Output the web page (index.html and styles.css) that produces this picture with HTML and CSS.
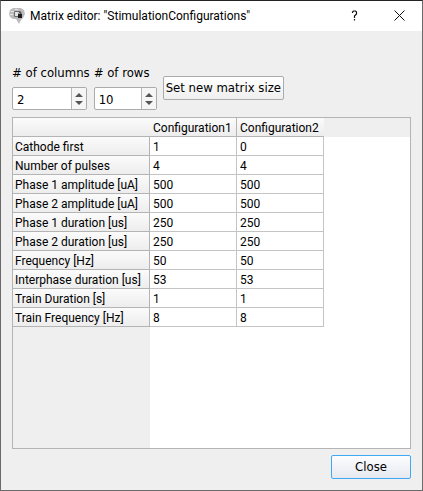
FILE: index.html
```html
<!DOCTYPE html>
<html lang="en">
<head>
<meta charset="utf-8">
<title>Matrix editor</title>
<link rel="stylesheet" href="styles.css">
</head>
<body>
<main class="window">
  <header class="titlebar">
    <svg class="app-icon" viewBox="0 0 16 16" aria-hidden="true">
      <path d="M4 0h8l3 2 1 4-2 4-2 2-2 4-3-5H4L1 9 0 6l1-4z" fill="#bcbcbc"/>
      <path d="M5.500 3.500h6v5h-6z" fill="#e4e4e4" stroke="#6a6a6a"/>
      <path d="M2 3.500h3M1 6.500h3M6 1.500h3" stroke="#e6e6e6"/>
      <path d="M9 6h4v4H9z" fill="#1c1c1c"/>
      <path d="M10 6V4.500h2V6" fill="none" stroke="#555"/>
    </svg>
    <h1 class="title">Matrix editor: "StimulationConfigurations"</h1>
    <button class="caption-button" type="button" aria-label="Help">
      <svg viewBox="0 0 12 12"><path d="M3.500 3V2L4.500 1H6.500L7.500 2V4L5.500 6V8M5.500 9V10.500" fill="none" stroke="#111" stroke-width="1.200"/></svg>
    </button>
    <button class="caption-button" type="button" aria-label="Close window">
      <svg viewBox="0 0 12 12"><path d="M0.500 0.500l10 10M10.500 0.500L0.500 10.500" stroke="#111"/></svg>
    </button>
  </header>
  <form class="content">
    <div class="size-row">
      <div class="fields">
        <div class="field">
          <label for="columns"># of columns</label>
          <div class="spin spin-wide">
            <input id="columns" type="number" value="2">
            <div class="steps">
              <button type="button" aria-label="More columns"><svg viewBox="0 0 8 4"><path d="M0 4l4-4 4 4z"/></svg></button>
              <button type="button" aria-label="Fewer columns"><svg viewBox="0 0 8 4"><path d="M0 0l4 4 4-4z"/></svg></button>
            </div>
          </div>
        </div>
        <div class="field">
          <label for="rows"># of rows</label>
          <div class="spin">
            <input id="rows" type="number" value="10">
            <div class="steps">
              <button type="button" aria-label="More rows"><svg viewBox="0 0 8 4"><path d="M0 4l4-4 4 4z"/></svg></button>
              <button type="button" aria-label="Fewer rows"><svg viewBox="0 0 8 4"><path d="M0 0l4 4 4-4z"/></svg></button>
            </div>
          </div>
        </div>
      </div>
      <button class="button" type="button">Set new matrix size</button>
    </div>
    <div class="matrix-frame">
      <table class="matrix">
        <colgroup><col class="col-name"><col class="col-value"><col class="col-value"></colgroup>
        <thead>
          <tr><td></td><th scope="col">Configuration1</th><th scope="col">Configuration2</th></tr>
        </thead>
        <tbody>
          <tr><th scope="row">Cathode first</th><td>1</td><td>0</td></tr>
          <tr><th scope="row">Number of pulses</th><td>4</td><td>4</td></tr>
          <tr><th scope="row">Phase 1 amplitude [uA]</th><td>500</td><td>500</td></tr>
          <tr><th scope="row">Phase 2 amplitude [uA]</th><td>500</td><td>500</td></tr>
          <tr><th scope="row">Phase 1 duration [us]</th><td>250</td><td>250</td></tr>
          <tr><th scope="row">Phase 2 duration [us]</th><td>250</td><td>250</td></tr>
          <tr><th scope="row">Frequency [Hz]</th><td>50</td><td>50</td></tr>
          <tr><th scope="row">Interphase duration [us]</th><td>53</td><td>53</td></tr>
          <tr><th scope="row">Train Duration [s]</th><td>1</td><td>1</td></tr>
          <tr><th scope="row">Train Frequency [Hz]</th><td>8</td><td>8</td></tr>
        </tbody>
      </table>
      <div class="header-rest"></div>
      <div class="names-rest"></div>
    </div>
    <div class="actions">
      <button class="button button-default" type="button">Close</button>
    </div>
  </form>
</main>
</body>
</html>
```
FILE: styles.css
```css
* {
  box-sizing: border-box;
}

body {
  margin: 0;
  color: #000;
  font: 13px/16px "DejaVu Sans Condensed", "Noto Sans", sans-serif;
}

button,
input {
  font: inherit;
  color: inherit;
}

.window {
  display: flex;
  flex-direction: column;
  min-height: 100vh;
  background: #efefef;
  border: 1px solid #6b6b6b;
  border-top-color: #252326;
}

.titlebar {
  display: flex;
  align-items: center;
  height: 30px;
  padding-left: 8px;
  background: #fff;
}

.app-icon {
  width: 16px;
  height: 16px;
  margin-right: 5px;
}

.title {
  flex: 1;
  margin: 0;
  font: 12px/16px Roboto, sans-serif;
  white-space: nowrap;
}

.caption-button {
  display: flex;
  align-items: center;
  justify-content: center;
  width: 45px;
  height: 30px;
  padding: 0;
  background: none;
  border: 0;
}

.caption-button svg {
  width: 12px;
  height: 12px;
}

.content {
  display: flex;
  flex: 1;
  flex-direction: column;
  padding: 34px 11px 11px;
}

.size-row {
  display: flex;
  align-items: center;
  gap: 6px;
  margin-bottom: 7px;
}

.fields {
  display: flex;
  gap: 4px;
}

.field {
  display: flex;
  flex-direction: column;
  gap: 6px;
  white-space: nowrap;
}

.spin {
  display: flex;
  width: 63px;
  height: 23px;
  overflow: hidden;
  background: #fff;
  border: 1px solid #ababab;
  border-radius: 2px;
}

.spin-wide {
  width: 75px;
}

.spin input {
  flex: 1;
  min-width: 0;
  padding: 2px 4px 0;
  background: none;
  border: 0;
  outline: 0;
  appearance: textfield;
}

.spin input::-webkit-inner-spin-button {
  display: none;
}

.steps {
  display: flex;
  flex-direction: column;
  width: 15px;
  background: #f6f6f6;
  border-left: 1px solid #b6b6b6;
}

.steps button {
  display: flex;
  flex: 1;
  align-items: flex-end;
  justify-content: center;
  padding: 2px 0;
  background: none;
  border: 0;
}

.steps button + button {
  align-items: flex-start;
}

.steps svg {
  width: 8px;
  height: 4px;
  fill: #555;
}

.button {
  height: 24px;
  padding: 0 2px;
  background: linear-gradient(#fff, #efefef);
  border: 1px solid #ababab;
  border-radius: 2px;
  white-space: nowrap;
}

.matrix-frame {
  display: grid;
  grid-template-columns: 137px 174px 1fr;
  grid-template-rows: 19px 190px 1fr;
  flex: 1;
  background: #fff;
  border: 1px solid #b4b4b4;
}

.matrix {
  grid-area: 1 / 1 / 3 / 3;
  width: 311px;
  table-layout: fixed;
  border-collapse: separate;
  border-spacing: 0;
  font: 12px/16px Roboto, sans-serif;
}

.col-name {
  width: 137px;
}

.col-value {
  width: 87px;
}

.matrix th,
.matrix td {
  height: 19px;
  padding: 2px 2px 0;
  border: solid #c4c4c4;
  border-width: 0 1px 1px 0;
  font-weight: 400;
  text-align: left;
  white-space: nowrap;
}

.matrix td,
.matrix thead th {
  padding-left: 3px;
}

.matrix th,
.matrix thead td {
  background: linear-gradient(#fbfbfb, #ededed);
  border-color: #b4b4b4;
}

.matrix thead td,
.matrix thead th:last-child {
  border-right: 0;
}

.header-rest {
  grid-area: 1 / 3;
  background: #efefef;
}

.names-rest {
  grid-area: 3 / 1;
  background: #efefef;
}

.actions {
  display: flex;
  justify-content: flex-end;
  margin-top: 6px;
}

.button-default {
  width: 80px;
  background: linear-gradient(#fdfdfe, #e5e9ef);
  border-color: #3fa9f5;
}
```
